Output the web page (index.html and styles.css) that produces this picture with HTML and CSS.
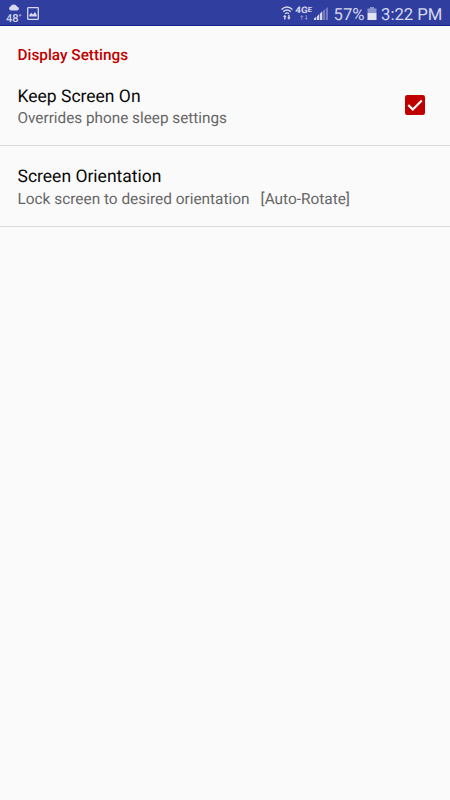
FILE: index.html
```html
<!DOCTYPE html>
<html lang="en">
<head>
<meta charset="utf-8">
<meta name="viewport" content="width=device-width, initial-scale=1">
<title>Display Settings</title>
<link rel="stylesheet" href="styles.css">
</head>
<body>
<header class="status">
  <div class="weather">
    <svg width="12" height="7" viewBox="0 0 12 7"><path d="M3 6.500a2.300 2.100 0 0 1-.5-4A3.500 3 0 0 1 9 2.400 2.300 2.100 0 0 1 9.200 6.500z" fill="#d5d8ee"/></svg>
    <span class="temp">48<span class="degree">°</span></span>
  </div>
  <svg class="picture" width="12" height="13" viewBox="0 0 12 13"><rect x=".7" y=".7" width="10.6" height="11.6" rx=".5" fill="none" stroke="#d5d8ee" stroke-width="1.3"/><path d="M2.300 9.500V8l2-2.200 1.500 1.600L8 5l1.700 2.800v1.700z" fill="#d5d8ee"/></svg>
  <div class="indicators">
    <svg class="wifi" width="12" height="14" viewBox="0 0 12 14"><g fill="none" stroke="#d5d8ee" stroke-width="1.400"><path d="M.5 3.400Q6-1.600 11.500 3.400M2.300 5.600Q6 2.400 9.700 5.600M4 7.700Q6 6.100 8 7.700"/></g><path d="M2 11l1.800-2.200L5.600 11H4.500v2.500H3.100V11zM6.100 11.500h1.100V9h1.400v2.500h1.100l-1.800 2.200z" fill="#d5d8ee"/></svg>
    <div class="network">
      <span class="lte">4G<span class="lte-small">E</span></span>
      <svg width="9" height="5" viewBox="0 0 9 5"><path d="M0 2l1.800-2 1.800 2H2.300v3h-1V2zM4.500 3h1.300V0h1v3h1.300L6.300 5z" fill="#7f88c8"/></svg>
    </div>
    <svg class="signal" width="14" height="13" viewBox="0 0 14 13"><path d="M0 13v-1.500l2.300-1.800V13zM3 13V9.200L5.300 7v6zM6 13V6.500l2.300-2.200V13z" fill="#d5d8ee"/><path d="M9 13V3.700L11.300 2v11zM12 13V1.400L14 0v13z" fill="#7079bd"/></svg>
    <span class="percent">57%</span>
    <svg class="battery" width="10" height="13" viewBox="0 0 10 13"><path d="M3 0h4v1.500h2.500V6H.5V1.500H3z" fill="#8b93cd"/><path d="M.5 6h9v7h-9z" fill="#e2e4f4"/></svg>
    <span class="clock">3:22 PM</span>
  </div>
</header>
<main>
  <h1 class="heading">Display Settings</h1>
  <label class="row row-first">
    <span class="copy"><span class="title">Keep Screen On</span><span class="summary">Overrides phone sleep settings</span></span>
    <svg class="check" width="20" height="20" viewBox="0 0 20 20" role="img" aria-label="Checked"><rect width="20" height="20" rx="2.300" fill="#c00000"/><path d="M3.300 10l4.500 4.500 9-9" fill="none" stroke="#fff" stroke-width="2.200"/></svg>
  </label>
  <div class="row">
    <span class="copy"><span class="title">Screen Orientation</span><span class="summary">Lock screen to desired orientation<span class="value">[Auto-Rotate]</span></span></span>
  </div>
</main>
</body>
</html>
```
FILE: styles.css
```css
* { box-sizing: border-box; }
body { margin: 0; min-height: 800px; background: #fafafa; font-family: Roboto, sans-serif; text-rendering: geometricPrecision; }
svg { display: block; flex: none; }
.status { display: flex; align-items: flex-start; height: 26px; padding: 0 8px 0 6px; background: #303f9f; border-bottom: 1px solid #16208a; color: #d5d8ee; white-space: nowrap; }
.weather { display: flex; flex-direction: column; width: 21px; padding-top: 4px; }
.weather svg { margin-left: 2px; }
.temp { font-size: 11px; line-height: 15px; font-weight: 500; }
.degree { font-size: 8px; vertical-align: 2px; line-height: 1; }
.picture { margin-top: 7px; }
.indicators { display: flex; margin-left: auto; }
.wifi { margin: 6px 3px 0 0; }
.network { display: flex; flex-direction: column; align-items: center; width: 16px; margin: 7px 2px 0 0; }
.lte { font-size: 9px; line-height: 8px; font-weight: 700; transform: scaleX(1.1) skewX(-4deg); }
.lte-small { font-size: 7px; vertical-align: 1px; line-height: 1; }
.signal { margin: 7px 6px 0 0; }
.percent { font-size: 16.700px; line-height: 31px; height: 25px; width: 32px; }
.battery { margin: 7px 5px 0 1px; }
.clock { font-size: 16.700px; line-height: 31px; height: 25px; width: 61px; }
.percent, .clock { margin-left: -0.500px; }
.heading { margin: 0; padding: 19px 17.500px 0; height: 40px; color: #c00000; font-size: 15.350px; line-height: 20px; font-weight: 500; }
.row { display: flex; justify-content: space-between; height: 81px; padding: 20px 25px 0 17.500px; border-bottom: 1px solid #d9d9d9; }
.row-first { height: 80px; }
.copy { display: flex; flex-direction: column; white-space: nowrap; }
.title { font-size: 17.500px; line-height: 22px; color: #080808; }
.summary { font-size: 15.400px; line-height: 22px; color: #666; }
.row-first .summary { font-size: 15.300px; line-height: 21px; }
.value { margin-left: 11px; }
.check { margin-top: 9px; }
```
